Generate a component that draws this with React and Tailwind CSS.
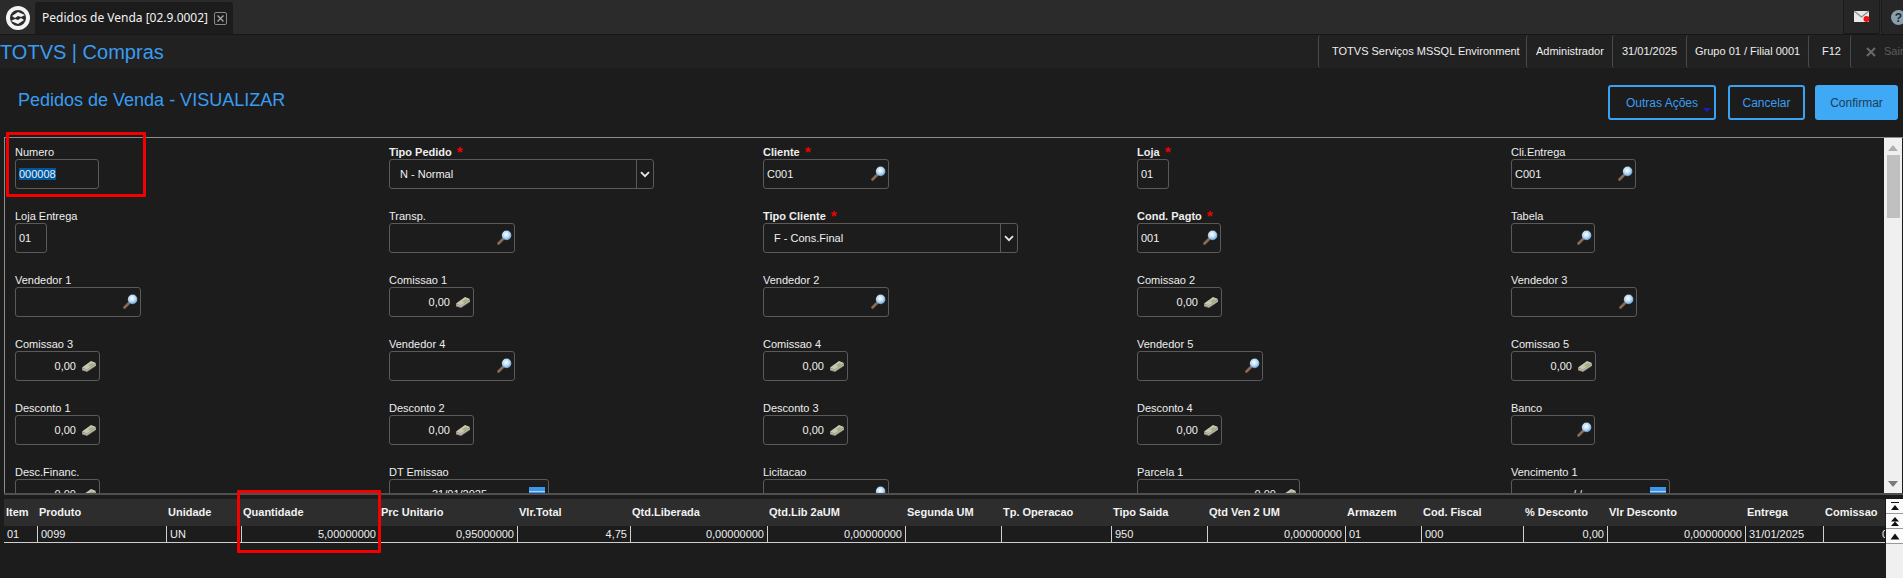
import React from "react";

const Logo = () => (
  <svg width="26" height="26" viewBox="0 0 26 26">
    <circle cx="13" cy="13" r="10" fill="none" stroke="#f4f4f4" strokeWidth="4" />
    <path d="M7 11 L13 7 L20 10 L16 12 L13 11 L10 13 Z" fill="#f4f4f4" />
    <path d="M19 15 L13 19 L6 16 L10 14 L13 15 L16 13 Z" fill="#f4f4f4" />
  </svg>
);

const Lens = () => (
  <svg width="15" height="15" viewBox="0 0 15 15" className="block">
    <defs>
      <radialGradient id="lensFill" cx="0.45" cy="0.4" r="0.6">
        <stop offset="0" stopColor="#ffffff" />
        <stop offset="0.6" stopColor="#b5d8f5" />
        <stop offset="1" stopColor="#5f93c4" />
      </radialGradient>
    </defs>
    <path d="M1.5 13.5 L6 9" stroke="#8a6a55" strokeWidth="2.6" strokeLinecap="round" />
    <circle cx="9.6" cy="5.4" r="4.8" fill="url(#lensFill)" />
  </svg>
);

const Money = () => (
  <svg width="16" height="13" viewBox="0 0 16 13" className="block">
    <path d="M1 8 L10 1.5 L15 3.5 L15 6 L6 12 L1 10.5 Z" fill="#8c8675" />
    <path d="M1 7.5 L10 1 L15 3 L6 9.5 Z" fill="#c9c6b4" />
    <path d="M7 5.5 L10.5 3 L13 4 L9.5 6.5 Z" fill="#9cb56e" />
    <path d="M1.5 9 L6 10.5 L15 4.6" stroke="#e4e2d6" strokeWidth="0.7" fill="none" />
  </svg>
);

const Calendar = () => (
  <svg width="16" height="14" viewBox="0 0 16 14" className="block">
    <rect width="16" height="14" fill="#3a97ee" />
    <rect y="4" width="16" height="1" fill="#a9d3f8" />
    <path d="M1 6 h2 v3 h-2 z M4.2 6 h2 v3 h-2 z M7.4 6 h2 v3 h-2 z M10.6 6 h2 v3 h-2 z M13.6 6 h2 v3 h-2 z" fill="#d5e9fb" />
  </svg>
);

const Chevron = () => (
  <svg width="10" height="7" viewBox="0 0 10 7">
    <path d="M1 1.2 L5 5.2 L9 1.2" fill="none" stroke="#e8e8e8" strokeWidth="1.8" />
  </svg>
);

const Star = () => (
  <span className="ml-[5px] inline-block align-top text-[15px] leading-[14px] font-bold text-[#f00000]">*</span>
);

function Field({ label, w, value, kind, bold, star, gap, selected, pl }) {
  return (
    <div className="h-[44px] w-[330px]">
      <div className={`h-[14px] text-[11px] leading-[14px] whitespace-nowrap text-[#eeeeee] ${bold ? "font-bold" : ""}`}>
        {label}
        {star && <Star />}
        {gap && <span className="inline-block w-[8px]" />}
      </div>
      <div
        style={{ width: w }}
        className="flex h-[30px] items-center overflow-hidden rounded-[3px] border border-[#5a5a5a] text-[11px] text-[#f0f0f0]"
      >
        {kind === "select" && (
          <>
            <span className="flex-1 pl-[10px]">{value}</span>
            <span className="flex h-full w-[17px] items-center justify-center border-l border-[#5a5a5a]">
              <Chevron />
            </span>
          </>
        )}
        {kind === "search" && (
          <>
            <span className="flex-1 pl-[3px]">{value}</span>
            <span className="mr-[2px] mb-[1px]"><Lens /></span>
          </>
        )}
        {kind === "money" && (
          <>
            <span className="flex-1 pr-[5px] text-right">{value}</span>
            <span className="mr-[2px]"><Money /></span>
          </>
        )}
        {kind === "date" && (
          <>
            <span className={`flex-1 ${pl}`}>{value}</span>
            <span className="mr-[3px] mb-[1px]"><Calendar /></span>
          </>
        )}
        {kind === "text" && (
          <span className="pl-[3px]">
            {selected ? <span className="bg-[#00579c] text-[#e8f2ff]">{value}</span> : value}
          </span>
        )}
      </div>
    </div>
  );
}

const fields = [
  { label: "Numero", w: 84, value: "000008", kind: "text", selected: true },
  { label: "Tipo Pedido", w: 265, value: "N - Normal", kind: "select", bold: true, star: true },
  { label: "Cliente", w: 126, value: "C001", kind: "search", bold: true, star: true, gap: true },
  { label: "Loja", w: 32, value: "01", kind: "text", bold: true, star: true, gap: true },
  { label: "Cli.Entrega", w: 125, value: "C001", kind: "search" },

  { label: "Loja Entrega", w: 32, value: "01", kind: "text" },
  { label: "Transp.", w: 126, value: "", kind: "search" },
  { label: "Tipo Cliente", w: 255, value: "F - Cons.Final", kind: "select", bold: true, star: true },
  { label: "Cond. Pagto", w: 84, value: "001", kind: "search", bold: true, star: true },
  { label: "Tabela", w: 84, value: "", kind: "search" },

  { label: "Vendedor 1", w: 126, value: "", kind: "search" },
  { label: "Comissao 1", w: 85, value: "0,00", kind: "money" },
  { label: "Vendedor 2", w: 126, value: "", kind: "search" },
  { label: "Comissao 2", w: 85, value: "0,00", kind: "money" },
  { label: "Vendedor 3", w: 126, value: "", kind: "search" },

  { label: "Comissao 3", w: 85, value: "0,00", kind: "money" },
  { label: "Vendedor 4", w: 126, value: "", kind: "search" },
  { label: "Comissao 4", w: 85, value: "0,00", kind: "money" },
  { label: "Vendedor 5", w: 126, value: "", kind: "search" },
  { label: "Comissao 5", w: 85, value: "0,00", kind: "money" },

  { label: "Desconto 1", w: 85, value: "0,00", kind: "money" },
  { label: "Desconto 2", w: 85, value: "0,00", kind: "money" },
  { label: "Desconto 3", w: 85, value: "0,00", kind: "money" },
  { label: "Desconto 4", w: 85, value: "0,00", kind: "money" },
  { label: "Banco", w: 84, value: "", kind: "search" },

  { label: "Desc.Financ.", w: 85, value: "0,00", kind: "money" },
  { label: "DT Emissao", w: 160, value: "31/01/2025", kind: "date", pl: "pl-[42px]" },
  { label: "Licitacao", w: 126, value: "", kind: "search" },
  { label: "Parcela 1", w: 163, value: "0,00", kind: "money" },
  { label: "Vencimento 1", w: 159, value: "/ /", kind: "date", pl: "pl-[61px]" },
];

const cols = "grid-cols-[33px_129px_75px_138px_138px_113px_137px_138px_96px_110px_96px_138px_76px_102px_84px_138px_78px_120px]";

const columns = [
  ["Item", "01", "l"],
  ["Produto", "0099", "l"],
  ["Unidade", "UN", "l"],
  ["Quantidade", "5,00000000", "r"],
  ["Prc Unitario", "0,95000000", "r"],
  ["Vlr.Total", "4,75", "r"],
  ["Qtd.Liberada", "0,00000000", "r"],
  ["Qtd.Lib 2aUM", "0,00000000", "r"],
  ["Segunda UM", "", "l"],
  ["Tp. Operacao", "", "l"],
  ["Tipo Saida", "950", "l"],
  ["Qtd Ven 2 UM", "0,00000000", "r"],
  ["Armazem", "01", "l"],
  ["Cod. Fiscal", "000", "l"],
  ["% Desconto", "0,00", "r"],
  ["Vlr Desconto", "0,00000000", "r"],
  ["Entrega", "31/01/2025", "l"],
  ["Comissao", "0,00000000", "r"],
];

const segments = [
  ["TOTVS Serviços MSSQL Environment", "w-[208px] pl-[13px]"],
  ["Administrador", "w-[86px] pl-[9px]"],
  ["31/01/2025", "w-[74px] pl-[9px]"],
  ["Grupo 01 / Filial 0001", "w-[122px] pl-[8px]"],
  ["F12", "w-[42px] pl-[13px]"],
];

const TriUp = ({ c = "#b0b0b0" }) => (
  <svg width="10" height="6" viewBox="0 0 10 6" className="block"><path d="M5 0 L10 6 L0 6 Z" fill={c} /></svg>
);

export default function App() {
  return (
    <div className="relative flex h-[578px] w-[1903px] flex-col overflow-hidden bg-[#1c1c1c] font-['Liberation_Sans',Arial,sans-serif]">
      {/* window bar */}
      <div className="flex h-[35px] shrink-0 border-b border-[#171717] bg-[#2b2b2b]">
        <div className="flex w-[35px] items-center justify-center pl-[1px] pt-[1px]">
          <Logo />
        </div>
        <div className="mt-[2px] flex w-[198px] items-center rounded-t-[3px] bg-[#1c1c1c] pl-[7px]">
          <span className="font-['Noto_Sans',sans-serif] text-[12px] whitespace-nowrap text-[#f2f2f2]">Pedidos de Venda [02.9.0002]</span>
          <span className="ml-[6px] flex h-[13px] w-[13px] items-center justify-center rounded-[2px] border border-[#8a8a8a] text-[#a8a8a8]">
            <svg width="7" height="7" viewBox="0 0 7 7"><path d="M0.5 0.5 L6.5 6.5 M6.5 0.5 L0.5 6.5" stroke="currentColor" strokeWidth="1.3" /></svg>
          </span>
        </div>
        <div className="flex-1" />
        <div className="flex h-[34px] w-[37px] items-center justify-center rounded-b-[3px] border border-t-0 border-[#1a1a1a] bg-[#262626]">
          <svg width="16" height="13" viewBox="0 0 16 13">
            <rect y="1" width="15" height="11" fill="#e8e8e8" />
            <path d="M0 1 L7.5 7 L15 1" fill="none" stroke="#8a8a8a" strokeWidth="1.2" />
            <circle cx="12.5" cy="9" r="3" fill="#ee1111" />
          </svg>
        </div>
        <div className="ml-[1px] flex h-[34px] w-[22px] justify-start overflow-hidden rounded-b-[3px] border-l border-[#1a1a1a] bg-[#262626] pl-[9px] pt-[10px]">
          <span className="flex h-[15px] w-[15px] shrink-0 items-center justify-center rounded-full bg-[#88a0ad] text-[12px] font-bold text-[#262626]">?</span>
        </div>
      </div>

      {/* module bar */}
      <div className="flex h-[33px] shrink-0 items-center bg-[#212121]">
        <div className="flex-1 whitespace-nowrap text-[20px] leading-[28px] text-[#3a9cf0]">TOTVS | Compras</div>
        {segments.map(([t, c]) => (
          <div key={t} className={`flex h-[33px] items-center rounded-l-[3px] border-l border-[#4a4a4a] text-[11px] whitespace-nowrap text-[#eeeeee] ${c}`}>
            {t}
          </div>
        ))}
        <div className="flex h-[33px] w-[53px] items-center overflow-hidden rounded-l-[3px] border-l border-[#4a4a4a] pl-[15px] text-[11px] whitespace-nowrap text-[#5c5c5c]">
          <svg width="10" height="10" viewBox="0 0 10 10" className="mr-[8px] shrink-0"><path d="M1 1 L9 9 M9 1 L1 9" stroke="#6a6a6a" strokeWidth="2" /></svg>
          Sair
        </div>
      </div>

      {/* title row */}
      <div className="flex h-[69px] shrink-0 items-start pt-[17px] pr-[5px] pl-[18px]">
        <div className="flex-1 pt-[5px] text-[18px] leading-[21px] text-[#3a9cf0]">Pedidos de Venda - VISUALIZAR</div>
        <button className="relative h-[35px] w-[108px] rounded-[3px] border-2 border-[#3aa2f2] text-[12px] text-[#3a9cf0]">
          Outras Ações
          <span className="absolute right-[3px] bottom-[6px] h-0 w-0 border-x-[4px] border-t-[4px] border-x-transparent border-t-[#1b1bc8]" />
        </button>
        <button className="ml-[12px] h-[35px] w-[77px] rounded-[3px] border-2 border-[#3aa2f2] text-[12px] text-[#3a9cf0]">Cancelar</button>
        <button className="ml-[10px] h-[35px] w-[83px] rounded-[3px] bg-[#3fa9f5] text-[12px] text-[#1d3b57]">Confirmar</button>
      </div>

      {/* form panel */}
      <div className="ml-[4px] flex h-[356px] shrink-0 overflow-hidden border-t border-l border-[#8d8d8d]">
        <div className="grid flex-1 grid-cols-[374px_374px_374px_374px_1fr] content-start gap-y-[20px] overflow-hidden pt-[7px] pl-[10px]">
          {fields.map((f) => (
            <Field key={f.label} {...f} />
          ))}
        </div>
        <div className="mr-[1px] flex w-[18px] shrink-0 flex-col items-center bg-[#f0f0f0]">
          <div className="flex h-[17px] items-center justify-center pt-[3px]"><TriUp /></div>
          <div className="h-[63px] w-[13px] bg-[#c0c0c0]" />
          <div className="flex-1" />
          <div className="mb-[6px] rotate-180"><TriUp c="#7a7a7a" /></div>
        </div>
      </div>

      {/* divider under the form */}
      <div className="ml-[4px] h-[2px] shrink-0 bg-[#505050]" />

      {/* items grid */}
      <div className="mt-[4px] flex min-h-0 flex-1">
        <div className="ml-[4px] w-[1881px] shrink-0 overflow-hidden">
          <div className={`grid h-[27px] w-max items-center bg-[#2d2d2d] text-[11px] font-bold text-[#f2f2f2] ${cols}`}>
            {columns.map(([h], i) => (
              <div key={h} className="flex items-center pl-[2px] whitespace-nowrap">
                {h}
                {i === 17 && <span className="ml-[9px] font-normal text-[#3a9cf0]">↑</span>}
              </div>
            ))}
          </div>
          <div className={`grid h-[16px] w-max border-b-0 text-[11px] leading-[16px] text-[#eeeeee] ${cols}`}>
            {columns.map(([h, v, a], i) => (
              <div
                key={h}
                className={`h-[16px] whitespace-nowrap ${i === 0 ? "pl-[3px]" : "border-l border-[#d0d0d0] pl-[3px]"} ${a === "r" ? "pr-[3px] text-right" : ""}`}
              >
                {v}
              </div>
            ))}
          </div>
          <div className="h-[1px] bg-[#cfcfcf]" />
        </div>
        <div className="ml-[1px] w-[17px] shrink-0 bg-[#f0f0f0]">
          {[
            <path key="a" d="M1 0 H9 V1 H1 Z M5 3 L9 8 H1 Z" fill="#111" />,
            <path key="b" d="M5 0 L9 4.5 H1 Z M5 4.5 L9 9 H1 Z" fill="#111" />,
            <path key="c" d="M5 1.5 L9.5 7.5 H0.5 Z" fill="#111" />,
          ].map((p, i) => (
            <div key={i} className="flex h-[15px] items-center justify-center border-b border-[#9a9a9a] bg-[#fbfbfb]">
              <svg width="10" height="9" viewBox="0 0 10 9">{p}</svg>
            </div>
          ))}
        </div>
      </div>

      {/* annotation boxes drawn over the screenshot */}
      <div className="pointer-events-none absolute top-[132px] left-[6px] h-[65px] w-[140px] rounded-[1px] border-[3px] border-[#f40000]" />
      <div className="pointer-events-none absolute top-[490px] left-[237px] h-[63px] w-[144px] rounded-[1px] border-[3px] border-[#f40000]" />
    </div>
  );
}
